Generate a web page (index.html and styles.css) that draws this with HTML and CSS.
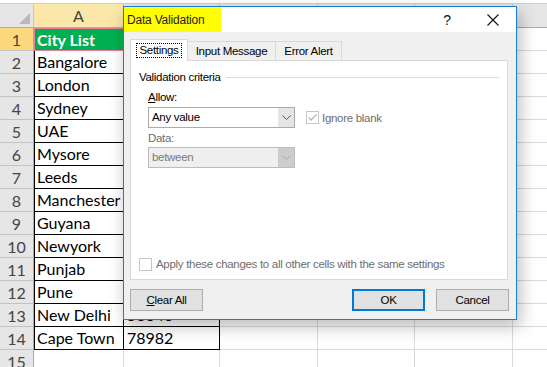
FILE: index.html
```html
<!DOCTYPE html>
<html lang="en">
<head>
  <meta charset="UTF-8" />
  <title>Data Validation</title>
  <link rel="stylesheet" href="styles.css">
</head>
<body>

<div class="sheet">
  <div class="topline"></div>
  <div class="grid">
    <div class="hd corner"></div>
    <div class="hd sel">A</div>
    <div class="hd">B</div>
    <div class="hd">C</div>
    <div class="hd">D</div>
    <div class="hd">E</div>
    <div class="hd">F</div>

    <div class="rh sel">1</div><div class="c head">City List</div><div class="c d"></div><div class="c"></div><div class="c"></div><div class="c"></div><div class="c"></div>
    <div class="rh">2</div><div class="c d a">Bangalore</div><div class="c d"></div><div class="c"></div><div class="c"></div><div class="c"></div><div class="c"></div>
    <div class="rh">3</div><div class="c d a">London</div><div class="c d"></div><div class="c"></div><div class="c"></div><div class="c"></div><div class="c"></div>
    <div class="rh">4</div><div class="c d a">Sydney</div><div class="c d"></div><div class="c"></div><div class="c"></div><div class="c"></div><div class="c"></div>
    <div class="rh">5</div><div class="c d a">UAE</div><div class="c d"></div><div class="c"></div><div class="c"></div><div class="c"></div><div class="c"></div>
    <div class="rh">6</div><div class="c d a">Mysore</div><div class="c d"></div><div class="c"></div><div class="c"></div><div class="c"></div><div class="c"></div>
    <div class="rh">7</div><div class="c d a">Leeds</div><div class="c d"></div><div class="c"></div><div class="c"></div><div class="c"></div><div class="c"></div>
    <div class="rh">8</div><div class="c d a">Manchester</div><div class="c d"></div><div class="c"></div><div class="c"></div><div class="c"></div><div class="c"></div>
    <div class="rh">9</div><div class="c d a">Guyana</div><div class="c d"></div><div class="c"></div><div class="c"></div><div class="c"></div><div class="c"></div>
    <div class="rh">10</div><div class="c d a">Newyork</div><div class="c d"></div><div class="c"></div><div class="c"></div><div class="c"></div><div class="c"></div>
    <div class="rh">11</div><div class="c d a">Punjab</div><div class="c d"></div><div class="c"></div><div class="c"></div><div class="c"></div><div class="c"></div>
    <div class="rh">12</div><div class="c d a">Pune</div><div class="c d"></div><div class="c"></div><div class="c"></div><div class="c"></div><div class="c"></div>
    <div class="rh">13</div><div class="c d a">New Delhi</div><div class="c d">56643</div><div class="c"></div><div class="c"></div><div class="c"></div><div class="c"></div>
    <div class="rh">14</div><div class="c d a">Cape Town</div><div class="c d">78982</div><div class="c"></div><div class="c"></div><div class="c"></div><div class="c"></div>
    <div class="rh">15</div><div class="c"></div><div class="c"></div><div class="c"></div><div class="c"></div><div class="c"></div><div class="c"></div>
  </div>
</div>

<!-- dialog over the sheet -->
<div class="dialog">
  <div class="titlebar">
    <div class="title">Data Validation</div>
    <div class="tb-btn">?</div>
    <div class="tb-btn">
      <svg width="12" height="12" viewBox="0 0 12 12"><path d="M0.5 0.5 L11.5 11.5 M11.5 0.5 L0.5 11.5" stroke="#111" stroke-width="1.1" fill="none"/></svg>
    </div>
  </div>

  <div class="tabs">
    <div class="tab active"><span class="focus">Settings</span></div>
    <div class="tab">Input Message</div>
    <div class="tab">Error Alert</div>
  </div>

  <div class="panel">
    <div class="crit-head">Validation criteria</div>
    <div class="fields">
      <div class="label"><u>A</u>llow:</div>
      <div class="row">
        <div class="select">
          <div class="val">Any value</div>
          <div class="drop">
            <svg width="9" height="5" viewBox="0 0 9 5"><path d="M0.5 0.5 L4.5 4.5 L8.5 0.5" stroke="#555" stroke-width="1" fill="none"/></svg>
          </div>
        </div>
        <div class="opt off">
          <span class="check">
            <svg width="11" height="11" viewBox="0 0 11 11"><path d="M1.5 5.5 L4 8 L9.5 2.5" stroke="#b5b5b5" stroke-width="1.3" fill="none"/></svg>
          </span>
          Ignore blank
        </div>
      </div>
      <div class="label off data">Data:</div>
      <div class="row">
        <div class="select disabled">
          <div class="val">between</div>
          <div class="drop">
            <svg width="9" height="5" viewBox="0 0 9 5"><path d="M0.5 0.5 L4.5 4.5 L8.5 0.5" stroke="#a8a8a8" stroke-width="1" fill="none"/></svg>
          </div>
        </div>
      </div>
    </div>
    <div class="opt off apply">
      <span class="check"></span>
      Apply these changes to all other cells with the same settings
    </div>
  </div>

  <div class="buttons">
    <div class="btn"><u>C</u>lear All</div>
    <div class="btn ok">OK</div>
    <div class="btn">Cancel</div>
  </div>
</div>

</body>
</html>
```

FILE: styles.css
```css
body {
  margin: 0;
  width: 547px;
  height: 367px;
  overflow: hidden;
  background-color: #fff;
  position: relative;
  font-family: Lato, 'Liberation Sans', sans-serif;
}

/* spreadsheet */
.sheet {
  width: 547px;
  overflow: hidden;
}

.topline {
  height: 3px;
  border-bottom: 1px solid #d0d0d0;
}

.grid {
  display: grid;
  grid-template-columns: 34px 90px 96px 98px 97px 98px 98px;
  grid-template-rows: 24px;
  grid-auto-rows: 23px;
}

.hd {
  background-color: #e6e6e6;
  border-right: 1px solid #c6c6c6;
  border-bottom: 1px solid #ababab;
  color: #444;
  font-size: 16px;
  display: flex;
  align-items: center;
  justify-content: center;
  box-sizing: border-box;
}

.hd.sel {
  background-color: #fce7ab;
  border-bottom-color: #e2a73a;
}

.corner {
  justify-content: flex-end;
  align-items: flex-end;
}

.corner::after {
  content: "";
  width: 11px;
  height: 11px;
  margin: 0 3px 3px 0;
  background-color: #b9b9b9;
  clip-path: polygon(100% 0, 100% 100%, 0 100%);
}

.rh {
  background-color: #e6e6e6;
  border-bottom: 1px solid #c3c3c3;
  border-right: 1px solid #ababab;
  color: #444;
  font-size: 16px;
  display: flex;
  align-items: center;
  justify-content: center;
  box-sizing: border-box;
}

.rh.sel {
  background-color: #fdd77b;
  border-right-color: #e2a73a;
}

.c {
  border-right: 1px solid #dadada;
  border-bottom: 1px solid #dadada;
  box-sizing: border-box;
  padding-left: 3px;
  font-size: 16px;
  line-height: 22px;
  color: #000;
  white-space: nowrap;
  overflow: hidden;
}

.c.d {
  border-right-color: #000;
  border-bottom-color: #000;
}

.c.a {
  border-left: 1px solid #000;
  padding-left: 2px;
}

.c.head {
  background-color: #00b050;
  color: #fff;
  font-weight: bold;
  border: 1px solid #ea7aa0;
  padding-left: 2px;
  line-height: 21px;
}

/* dialog */
.dialog {
  position: absolute;
  left: 123px;
  top: 6px;
  width: 394px;
  height: 314px;
  box-sizing: border-box;
  border: 1px solid #1a7fd4;
  background-color: #f0f0f0;
  box-shadow: 3px 6px 16px rgba(0, 0, 0, 0.28);
  display: flex;
  flex-direction: column;
  font-family: 'Liberation Sans', Arial, sans-serif;
  font-size: 11.5px;
  letter-spacing: -0.3px;
  color: #000;
}

.titlebar {
  height: 25px;
  background-color: #fff;
  display: flex;
  align-items: stretch;
}

.title {
  width: 97px;
  background-color: #ffff00;
  padding-left: 3px;
  box-sizing: border-box;
  display: flex;
  align-items: center;
  font-size: 12px;
  letter-spacing: -0.2px;
  white-space: nowrap;
  color: #2a1a1a;
}

.tb-btn {
  width: 46px;
  display: flex;
  align-items: center;
  justify-content: center;
  font-size: 14px;
  color: #111;
}

.tb-btn:nth-child(2) {
  margin-left: auto;
}

.tabs {
  height: 28px;
  box-sizing: border-box;
  display: flex;
  align-items: flex-end;
  padding-left: 6px;
  position: relative;
  z-index: 1;
}

.tab {
  height: 19px;
  box-sizing: border-box;
  border: 1px solid #d9d9d9;
  border-bottom: none;
  margin-left: -1px;
  display: flex;
  align-items: center;
  justify-content: center;
  background-color: #f0f0f0;
}

.tab:nth-child(2) { width: 89px; }
.tab:nth-child(3) { width: 67px; }

.tab.active {
  width: 58px;
  height: 22px;
  margin-left: 0;
  margin-bottom: -1px;
  background-color: #fff;
  position: relative;
  z-index: 2;
}

.focus {
  border: 1px dotted #000;
  padding: 0 2px;
  line-height: 13px;
}

.panel {
  height: 220px;
  margin: 0 8px 0 6px;
  box-sizing: border-box;
  border: 1px solid #d9d9d9;
  background-color: #fff;
  padding: 8px 8px 7px 8px;
  display: flex;
  flex-direction: column;
}

.crit-head {
  display: flex;
  align-items: center;
  line-height: 16px;
}

.crit-head::after {
  content: "";
  flex: 1;
  height: 1px;
  background-color: #dcdcdc;
  margin-left: 5px;
}

.fields {
  padding-left: 9px;
}

.label {
  line-height: 16px;
  margin-top: 4px;
}

.label.data {
  margin-top: 2px;
}

.row {
  display: flex;
  align-items: center;
  gap: 11px;
  margin-top: 2px;
}

.label.data + .row {
  margin-top: 1px;
}

.select {
  width: 147px;
  height: 21px;
  box-sizing: border-box;
  border: 1px solid #acacac;
  background-color: #fff;
  display: flex;
}

.select .val {
  flex: 1;
  padding-left: 3px;
  line-height: 19px;
}

.select .drop {
  width: 16px;
  background-color: #e5e5e5;
  display: flex;
  align-items: center;
  justify-content: center;
}

.select.disabled {
  background-color: #efefef;
  border-color: #bcbcbc;
  color: #7a7a7a;
}

.select.disabled .drop {
  background-color: #cccccc;
}

.opt {
  display: flex;
  align-items: center;
  gap: 3px;
  line-height: 16px;
}

.off {
  color: #6d6d6d;
}

.check {
  width: 13px;
  height: 13px;
  box-sizing: border-box;
  border: 1px solid #c6c6c6;
  background-color: #fff;
  display: flex;
  align-items: center;
  justify-content: center;
}

.apply {
  margin-top: auto;
  gap: 4px;
}

.buttons {
  display: flex;
  gap: 11px;
  margin: 9px 7px 0 6px;
}

.btn {
  width: 73px;
  height: 22px;
  box-sizing: border-box;
  border: 1px solid #adadad;
  background-color: #e1e1e1;
  display: flex;
  align-items: center;
  justify-content: center;
}

.btn.ok {
  margin-left: auto;
  border: 2px solid #0078d7;
}
```
